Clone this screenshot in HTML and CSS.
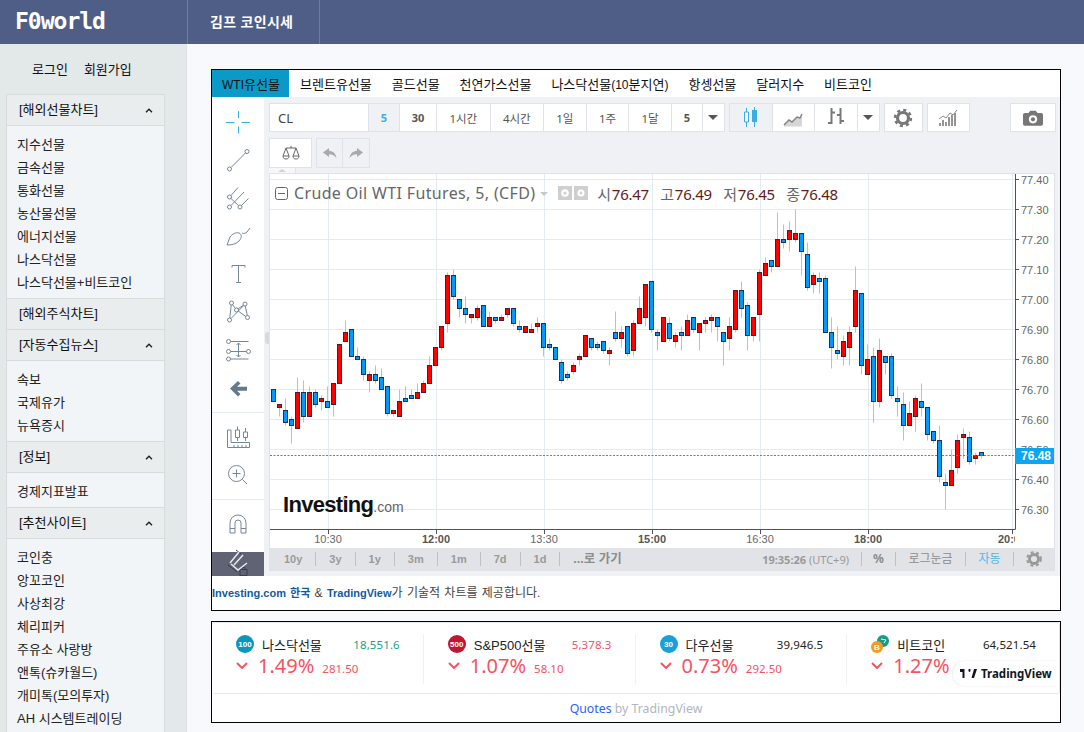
FILE: index.html
```html
<!DOCTYPE html>
<html lang="ko">
<head>
  <meta charset="UTF-8">
  <meta name="viewport" content="width=device-width, initial-scale=1.0">
  <title>F0world</title>
  <link rel="stylesheet" href="styles.css">
</head>
<body>
  <header class="topbar">
    <a class="logo">F0world</a>
    <nav class="topnav"><a>김프 코인시세</a></nav>
  </header>

  <div class="layout">
    <aside class="sidebar">
      <div class="auth"><a>로그인</a><a>회원가입</a></div>

      <div class="sideHead"><span>[해외선물차트]</span><svg class="chev" viewBox="0 0 8 5"><path d="M1 4.2 4 1.2l3 3"/></svg></div>
      <ul class="sideList">
        <li>지수선물</li><li>금속선물</li><li>통화선물</li><li>농산물선물</li><li>에너지선물</li><li>나스닥선물</li><li>나스닥선물+비트코인</li>
      </ul>

      <div class="sideHead"><span>[해외주식차트]</span></div>

      <div class="sideHead"><span>[자동수집뉴스]</span><svg class="chev" viewBox="0 0 8 5"><path d="M1 4.2 4 1.2l3 3"/></svg></div>
      <ul class="sideList">
        <li>속보</li><li>국제유가</li><li>뉴욕증시</li>
      </ul>

      <div class="sideHead"><span>[정보]</span><svg class="chev" viewBox="0 0 8 5"><path d="M1 4.2 4 1.2l3 3"/></svg></div>
      <ul class="sideList">
        <li>경제지표발표</li>
      </ul>

      <div class="sideHead"><span>[추천사이트]</span><svg class="chev" viewBox="0 0 8 5"><path d="M1 4.2 4 1.2l3 3"/></svg></div>
      <ul class="sideList">
        <li>코인충</li><li>앙꼬코인</li><li>사상최강</li><li>체리피커</li><li>주유소 사랑방</li><li>앤톡(슈카월드)</li><li>개미톡(모의투자)</li><li>AH 시스템트레이딩</li>
      </ul>
    </aside>

    <main class="content">
      <section class="chartBox">
        <div class="tabs">
          <a class="tab active"><span class="latin">WTI</span>유선물</a>
          <a class="tab">브렌트유선물</a>
          <a class="tab">골드선물</a>
          <a class="tab">천연가스선물</a>
          <a class="tab">나스닥선물<span class="latin">(10</span>분지연<span class="latin">)</span></a>
          <a class="tab">항셍선물</a>
          <a class="tab">달러지수</a>
          <a class="tab">비트코인</a>
        </div>

        <div class="widget">
          <div class="tools">
            <div class="tool"><svg class="ico" viewBox="0 0 28 28"><path class="blue" d="M2 14.5h8.5M17.500 14.500H26M14.500 3v7M14.500 18.500v7"/></svg></div>
            <div class="tool"><svg class="ico" viewBox="0 0 28 28"><circle cx="5.500" cy="23" r="2"/><circle cx="23" cy="5.500" r="2"/><path d="M7 21.500 21.500 7"/></svg></div>
            <div class="tool"><svg class="ico" viewBox="0 0 28 28"><circle cx="5.500" cy="13" r="2"/><circle cx="5.500" cy="23" r="2"/><circle cx="16" cy="23" r="2"/><path d="M7 11.500 14 3.500M7 14.500l7.500 7M7 21.500 20 8M17.500 21.500l7-7"/></svg></div>
            <div class="tool"><svg class="ico" viewBox="0 0 28 28"><path d="M3 23 6 15c2-3 6-5 9-4 3 1 3 5 0 8-3 3-7 4-12 4zM18 11c2 1 4 0 5-1M23 10l3-4"/></svg></div>
            <div class="tool"><svg class="ico" viewBox="0 0 28 28"><path d="M8 5.500h13M14.500 5.500v17M12 22.500h5M8 5.500v2M21 5.500v2"/></svg></div>
            <div class="tool"><svg class="ico" viewBox="0 0 28 28"><circle cx="7.500" cy="5" r="2"/><circle cx="21" cy="6" r="2"/><circle cx="12.500" cy="12" r="2"/><circle cx="5.500" cy="22" r="2"/><circle cx="23.500" cy="19.500" r="2"/><path d="M7.200 7 5.800 20M8.500 6.700l3 3.800M14 10.800l5.500-3.600M14.200 13l7.600 5.500M21.300 8l2 9.500M7 20.500 19.700 7.500"/></svg></div>
            <div class="tool"><svg class="ico" viewBox="0 0 28 28"><circle cx="4.500" cy="5.500" r="2"/><circle cx="4.500" cy="15.500" r="2"/><circle cx="24.500" cy="15.500" r="2"/><circle cx="4.500" cy="23" r="2"/><path d="M6.500 5.500h18M6.500 15.500h16M6.500 23h18M14.500 7v14M12.500 9l2-2 2 2M12.500 19l2 2 2-2"/></svg></div>
            <div class="tool"><svg class="ico" viewBox="0 0 28 28"><path class="solid" d="M6 14.500 14 7l2.500 2.500-3.500 3.200h10v4H13l3.500 3.300L14 22.500z"/></svg></div>
            <div class="toolLine"></div>
            <div class="tool"><svg class="ico" viewBox="0 0 28 28"><path d="M3.500 8v17.500h22v-5H7V8zM10 25v-2M14 25v-2M18 25v-2M22 25v-2M13.500 4.500V19M21.500 6v13"/><path class="fillWhite" d="M11.500 8h4v7.500h-4zM19.500 10h4v5.500h-4z"/></svg></div>
            <div class="tool"><svg class="ico" viewBox="0 0 28 28"><circle cx="12.500" cy="13.500" r="8"/><path d="M18.500 19.500l4.500 4.500M8.500 13.500h8M12.500 9.500v8"/></svg></div>
            <div class="toolLine last"></div>
            <div class="tool"><svg class="ico" viewBox="0 0 28 28"><path d="M6 23V13a8 8 0 0 1 16 0v10h-5V13a3 3 0 0 0-6 0v10zM6 18.500h5M17 18.500h5"/></svg></div>
            <div class="lockBox"><svg class="lockIco" viewBox="0 0 52 24"><path class="lockDark" d="M24-2 29 2"/><path class="lockWhite" d="M18 11 27 0M22 13 31 3"/><path class="lockDark" d="M16 13l9 7M28 17.500h7v6h-7zM30 17.500v-2h3v2"/><path class="lockWhite" d="M19 12l7 6 9-7"/></svg></div>
          </div>

          <div class="chartSide">
            <div class="handle"></div>
            <div class="bar">
              <div class="group">
                <div class="symbol">CL</div>
                <a class="btn on num">5</a><a class="btn dark num2">30</a><a class="btn hr">1시간</a><a class="btn hr">4시간</a><a class="btn">1일</a><a class="btn">1주</a><a class="btn">1달</a><a class="btn dark num">5</a>
                <a class="btn caret"><i class="tri"></i></a>
              </div>
              <div class="group">
                <a class="btn pressed"><svg class="tbIco" viewBox="0 0 20 22"><path class="candleLine" d="M5.500 1v4M5.500 15v5"/><path class="candleBody" d="M3.500 5h4v10h-4z"/><path class="candleLine" d="M13.500 0v3M13.500 15v5"/><path class="candleFill" d="M11 3h5v12h-5z"/></svg></a>
                <a class="btn"><svg class="tbIco" viewBox="0 0 20 22"><path class="areaFill" d="M1 18 6 13l3 2 5-5 3 1 2-4v12.500H1z"/><path class="areaLine" d="M1 18 6 13l3 2 5-5 3 1 2-4"/></svg></a>
                <a class="btn"><svg class="tbIco" viewBox="0 0 20 22"><path class="barLine" d="M5.500 1v16M2 16h3.500M5.500 5.500H9M14.500 1v16M11 8h3.500M14.500 14H18"/></svg></a>
                <a class="btn caret"><i class="tri"></i></a>
              </div>
              <div class="group">
                <a class="btn gear"><svg class="gearIco" viewBox="0 0 20 20"><circle class="gearRing" cx="10" cy="10" r="5.500"/><circle class="gearTeeth" cx="10" cy="10" r="8"/></svg></a>
              </div>
              <div class="group">
                <a class="btn ind"><svg class="tbIco" viewBox="0 0 20 20"><path class="miniBars" d="M2 18v-3M5 18v-6M8 18v-4M11 18V9M14 18V7M17 18V5"/><path class="miniLine" d="M1 11l4-3 3 2 4-5 3 2 4-5"/></svg></a>
              </div>
              <div class="group push">
                <a class="btn cam"><svg class="camIco" viewBox="0 0 22 17"><path d="M2 3h4l2-2.500h6L16 3h4a2 2 0 0 1 2 2v10a2 2 0 0 1-2 2H2a2 2 0 0 1-2-2V5a2 2 0 0 1 2-2z"/><circle class="camHole" cx="11" cy="10" r="4.500"/><circle cx="11" cy="10" r="2.300"/></svg></a>
              </div>
            </div>

            <div class="bar second">
              <div class="group"><a class="btn scale"><svg class="scaleIco" viewBox="0 0 18 16"><path d="M4 3h10M9 1v2M4 3 1 11M4 3l3 8M14 3l-3 8M14 3l3 8"/><path class="scaleFill" d="M1 11h6c0 2-1 3-3 3s-3-1-3-3zM11 11h6c0 2-1 3-3 3s-3-1-3-3z"/></svg></a></div>
              <div class="group off">
                <a class="btn hist"><svg class="histIco" viewBox="0 0 14 11"><path d="M6 0 0 4.500 6 9V6.300c3.500 0 5.800 1.200 7.500 4C13 5.500 10 3 6 2.700z"/></svg></a>
                <a class="btn hist"><svg class="histIco flip" viewBox="0 0 14 11"><path d="M6 0 0 4.500 6 9V6.300c3.500 0 5.800 1.200 7.500 4C13 5.500 10 3 6 2.700z"/></svg></a>
              </div>
            </div>
            <div class="foldTab"><i class="triUp"></i></div>

            <div class="pane">
              <svg id="plot" class="plot" viewBox="270 174 784 374"></svg>

              <div class="legend">
                <svg class="fold" viewBox="0 0 13 13"><rect x=".5" y=".5" width="12" height="12" rx="2"/><path d="M3 6.500h7"/></svg>
                <span class="title">Crude Oil WTI Futures, 5, (CFD)</span>
                <i class="triMini"></i>
                <span class="flag"><svg viewBox="0 0 14 14"><circle cx="7" cy="7" r="3.800"/><circle class="flagDot" cx="7" cy="7" r="1.600"/></svg></span>
                <span class="flag"><svg viewBox="0 0 14 14"><circle cx="7" cy="7" r="3.500"/><circle class="flagDot" cx="7" cy="7" r="1.400"/></svg></span>
                <span class="ohlc"><b>시</b>76.47</span>
                <span class="ohlc"><b>고</b>76.49</span>
                <span class="ohlc"><b>저</b>76.45</span>
                <span class="ohlc"><b>종</b>76.48</span>
              </div>

              <div class="brand">Investing<small>.com</small><i class="brandDot"></i></div>

              <div class="range">
                <a>10y</a><a>3y</a><a>1y</a><a>3m</a><a>1m</a><a>7d</a><a>1d</a><a class="goto">...로 가기</a>
                <span class="clock">19:35:26 <em>(UTC+9)</em></span>
                <a class="opt pc">%</a><a class="opt reg">로그눈금</a><a class="opt auto">자동</a>
                <svg class="rangeGear" viewBox="0 0 20 20"><circle class="gearRing" cx="10" cy="10" r="5"/><circle class="gearTeeth" cx="10" cy="10" r="7.500"/></svg>
              </div>
            </div>
          </div>
        </div>

        <p class="credit"><a>Investing.com 한국</a> &amp; <a>TradingView</a>가 기술적 차트를 제공합니다.</p>
      </section>

      <section class="tickerBox">
        <div class="tickerCard">
          <div class="cell">
            <div class="rowTop">
              <span class="name"><i class="badge nq">100</i>나스닥선물</span><span class="price up">18,551.6</span>
            </div>
            <div class="rowBottom">
              <svg class="down" viewBox="0 0 12 7"><path d="M1 1l5 5 5-5"/></svg><span class="pct">1.49%</span><span class="diff">281.50</span>
            </div>
          </div>
          <div class="cell">
            <div class="rowTop">
              <span class="name"><i class="badge sp">500</i>S&amp;P500선물</span><span class="price dn">5,378.3</span>
            </div>
            <div class="rowBottom">
              <svg class="down" viewBox="0 0 12 7"><path d="M1 1l5 5 5-5"/></svg><span class="pct">1.07%</span><span class="diff">58.10</span>
            </div>
          </div>
          <div class="cell">
            <div class="rowTop">
              <span class="name"><i class="badge dj">30</i>다우선물</span><span class="price">39,946.5</span>
            </div>
            <div class="rowBottom">
              <svg class="down" viewBox="0 0 12 7"><path d="M1 1l5 5 5-5"/></svg><span class="pct">0.73%</span><span class="diff">292.50</span>
            </div>
          </div>
          <div class="cell">
            <div class="rowTop">
              <span class="name"><svg class="coin" viewBox="0 0 18 18"><circle class="coinBack" cx="12" cy="6" r="6"/><path class="coinMark" d="M10 4l5 1-2 3"/><circle class="coinFront" cx="6" cy="12" r="6"/><text class="coinSign" x="6" y="15">B</text></svg>비트코인</span><span class="price">64,521.54</span>
            </div>
            <div class="rowBottom">
              <svg class="down" viewBox="0 0 12 7"><path d="M1 1l5 5 5-5"/></svg><span class="pct">1.27%</span>
            </div>
          </div>
          <div class="tvBadge">
            <svg class="tvLogo" viewBox="0 6 34 12" preserveAspectRatio="none"><path d="M14 6H0v4h5v8h4V6zM28 18h-5l5-12h6zM19 10a2.200 2.200 0 1 0 0-4.400 2.200 2.200 0 0 0 0 4.400z"/></svg>
            TradingView
          </div>
        </div>
        <div class="quotes"><a>Quotes</a> by TradingView</div>
      </section>
    </main>
  </div>

  <script src="chart.js"></script>
</body>
</html>
```

FILE: styles.css
```css
*{
  box-sizing: border-box;
}
html, body{
  margin: 0;
  height: 100%;
  overflow: hidden;
}
body{
  font-family: "Liberation Sans", "Noto Sans CJK KR", sans-serif;
  font-size: 13px;
  color: #111;
  background: #f8f9fc;
}
ul{
  list-style: none;
  margin: 0;
  padding: 0;
}
i, em{
  font-style: normal;
}
.latin{
  font-size: 12px;
}

/* top */
.topbar{
  display: flex;
  height: 44px;
  background: #4f5e86;
  color: #fff;
}
.logo{
  width: 188px;
  padding-left: 15px;
  border-right: 1px solid #6f7c9d;
  font: bold 23px/43px "DejaVu Sans Mono", monospace;
  letter-spacing: -1px;
}
.topnav{
  display: flex;
  align-items: center;
  width: 132px;
  padding: 0 0 2px 22px;
  border-right: 1px solid #6f7c9d;
  font-size: 14px;
  font-weight: bold;
  letter-spacing: .3px;
}

.layout{
  display: flex;
  height: 688px;
}

/* sidebar */
.sidebar{
  width: 187px;
  flex: none;
  padding-left: 6px;
  padding-right: 21px;
  background: #e3e8e8;
  border-right: 1px solid #dde2e2;
  overflow: hidden;
}
.auth{
  display: flex;
  align-items: center;
  gap: 16px;
  height: 50px;
  padding: 0 0 2px 26px;
}
.sideHead{
  display: flex;
  align-items: center;
  justify-content: space-between;
  height: 31px;
  padding: 0 11px 3px 12px;
  background: #e9eded;
  border: 1px solid #d6dbdb;
  border-bottom: 0;
}
.chev{
  width: 8px;
  height: 5px;
  margin-top: 3px;
  fill: none;
  stroke: #1b1b1b;
  stroke-width: 1.3;
}
.sideList{
  padding: 7px 0 4px 10px;
  background: #f1f5f7;
  border: 1px solid #d6dbdb;
  border-bottom: 0;
}
.sideList li{
  height: 23px;
  line-height: 23px;
  color: #222;
}

/* content */
.content{
  flex: 1;
  padding: 25px 23px 0 24px;
}
.chartBox{
  height: 542px;
  background: #fff;
  border: 1px solid #000;
}
.tabs{
  display: flex;
  height: 27px;
  background: #fff;
}
.tab{
  padding: 0 10px;
  line-height: 29px;
}
.tab.active{
  width: 77px;
  margin-right: 1px;
  background: #0b99c7;
  white-space: nowrap;
}
.widget{
  display: flex;
  height: 479px;
  background: #f0f1f5;
}

/* left tools */
.tools{
  display: flex;
  flex-direction: column;
  width: 52px;
  padding-top: 6px;
  background: #fff;
}
.tool{
  display: flex;
  align-items: center;
  justify-content: center;
  flex: none;
  height: 38px;
}
.ico{
  width: 28px;
  height: 28px;
  fill: none;
  stroke: #758696;
  stroke-width: 1;
}
.ico .blue{
  stroke: #34b6e9;
}
.ico .solid{
  fill: #64798c;
  stroke: none;
}
.ico .fillWhite{
  fill: #fff;
}
.toolLine{
  flex: none;
  height: 1px;
  margin: 5px 0 4px;
  background: #e3ebf0;
}
.toolLine.last{
  margin: 6px 0 5px;
}
.lockBox{
  margin-top: auto;
  height: 24px;
  background: #5f6374;
}
.lockIco{
  display: block;
  width: 52px;
  height: 24px;
  fill: none;
  overflow: visible;
}
.lockWhite{
  stroke: #e8eaee;
  stroke-width: 1.5;
}
.lockDark{
  stroke: #3b3f4d;
}

/* chart column */
.chartSide{
  position: relative;
  flex: 1;
  padding: 6px 5px 5px;
}
.handle{
  position: absolute;
  left: 1px;
  top: 235px;
  width: 4px;
  height: 12px;
  border-radius: 3px 0 0 3px;
  background: #d7d9de;
}
.bar{
  display: flex;
  gap: 4px;
  height: 29px;
}
.bar.second{
  height: 30px;
  margin-top: 6px;
}
.group{
  display: flex;
  background: #fff;
  border: 1px solid #dfe2e8;
}
.group.push{
  margin-left: auto;
  margin-right: -1px;
}
.group.off{
  background: #f0f1f5;
}
.symbol{
  width: 99px;
  padding-left: 8px;
  border-right: 1px solid #dfe2e8;
  font: 13px/28px "Noto Sans", sans-serif;
  color: #444;
}
.btn{
  display: flex;
  align-items: center;
  justify-content: center;
  width: 42.67px;
  border-right: 1px solid #dfe2e8;
  font: 11.5px "Noto Sans", "Noto Sans CJK KR", sans-serif;
  color: #555;
}
.btn:last-child{
  border-right: 0;
}
.btn.num{
  width: 31px;
}
.btn.num2{
  width: 37px;
}
.btn.hr{
  width: 53.5px;
}
.btn.dark{
  font-size: 11px;
  font-weight: bold;
}
.btn.on{
  background: #f0f1f5;
  color: #39ade6;
  font-size: 11px;
  font-weight: bold;
}
.btn.caret{
  width: 21px;
}
.tri{
  width: 0;
  height: 0;
  border-left: 5px solid transparent;
  border-right: 5px solid transparent;
  border-top: 5px solid #555;
}
.btn.pressed{
  background: #f0f1f5;
}
.btn.gear{
  width: 37px;
}
.btn.ind{
  width: 41px;
}
.btn.cam{
  width: 44px;
}
.btn.scale{
  width: 41px;
}
.btn.hist{
  width: 26px;
}
.tbIco{
  width: 20px;
  height: 22px;
  fill: none;
}
.candleLine{
  stroke: #39ade6;
}
.candleBody{
  stroke: #39ade6;
  fill: #fff;
}
.candleFill{
  fill: #39ade6;
}
.areaFill{
  fill: #d6d6d6;
}
.areaLine{
  stroke: #808080;
  stroke-width: 1.4;
}
.barLine{
  stroke: #787878;
  stroke-width: 2;
}
.miniBars{
  stroke: #8a8a8a;
  stroke-width: 1.8;
}
.miniLine{
  stroke: #8a8a8a;
}
.gearIco{
  width: 20px;
  height: 20px;
  fill: none;
}
.gearRing{
  stroke: #777;
  stroke-width: 3.200;
  fill: none;
}
.gearTeeth{
  stroke: #777;
  stroke-width: 2.400;
  stroke-dasharray: 3.100 3.180;
  fill: none;
}
.camIco{
  width: 20px;
  height: 16px;
  fill: #777;
}
.camHole{
  fill: #fff;
}
.scaleIco{
  width: 18px;
  height: 16px;
  fill: none;
  stroke: #666;
}
.scaleFill{
  fill: #fff;
}
.histIco{
  width: 14px;
  height: 11px;
  fill: #a9a9a9;
}
.histIco.flip{
  transform: scaleX(-1);
}
.foldTab{
  display: flex;
  align-items: center;
  justify-content: center;
  width: 27px;
  height: 5px;
  background: #f7f7f9;
  border-right: 1px solid #dfe2e8;
}
.triUp{
  width: 0;
  height: 0;
  border-left: 4px solid transparent;
  border-right: 4px solid transparent;
  border-bottom: 3px solid #d0d2d8;
}

/* chart */
.pane{
  position: relative;
  width: 786px;
  height: 398px;
  background: #fff;
  border: 1px solid #dfe2e8;
}
.plot{
  display: block;
  width: 784px;
  height: 374px;
}
.gridLine{
  stroke: #e3ebf0;
}
.axisLine{
  stroke: #50535e;
}
.priceText{
  font: 11px "Liberation Sans", sans-serif;
  fill: #666;
}
.timeText{
  font: 11px "Liberation Sans", sans-serif;
  fill: #666;
  text-anchor: middle;
}
.timeText.major{
  font-weight: bold;
  fill: #555;
}
.lastLine{
  stroke: #0c9be8;
  stroke-dasharray: 2 1.500;
}
.lastBox{
  fill: #0ca5f4;
}
.lastText{
  font: bold 12px "Liberation Sans", sans-serif;
  fill: #fff;
}
.maskWhite{
  fill: #fff;
}
.wick.r{
  stroke: #a9c9cd;
}
.wick.b{
  stroke: #eaa9b6;
}
.body.r{
  fill: #ff0000;
  stroke: #4f1a2a;
}
.body.b{
  fill: #0099ff;
  stroke: #1c2f5a;
}

.legend{
  position: absolute;
  left: 5px;
  top: 10px;
  display: flex;
  align-items: center;
  height: 18px;
  font: 15px "Noto Sans", "Noto Sans CJK KR", sans-serif;
  white-space: nowrap;
}
.fold{
  width: 13px;
  height: 13px;
  margin-right: 6px;
  flex: none;
  fill: none;
  stroke: #666;
}
.title{
  font-size: 16px;
  letter-spacing: .35px;
  color: #666;
}
.triMini{
  width: 0;
  height: 0;
  margin: 1px 10px 0 5px;
  border-left: 4px solid transparent;
  border-right: 4px solid transparent;
  border-top: 4px solid #c8c8c8;
}
.flag{
  width: 14px;
  height: 14px;
  margin-right: 2px;
  background: #cfcfcf;
}
.flag svg{
  display: block;
  fill: #fff;
}
.flagDot{
  fill: #cfcfcf;
}
.ohlc{
  width: 63px;
  letter-spacing: -.3px;
  color: #5f2020;
}
.flag + .ohlc{
  margin-left: 7px;
}
.ohlc b{
  margin-right: 1px;
  font-weight: normal;
  color: #666;
}
.brand{
  position: absolute;
  left: 13px;
  top: 318px;
  font: bold 22px/26px "Liberation Sans", sans-serif;
  letter-spacing: -.7px;
  color: #111;
}
.brand small{
  font-size: 14px;
  font-weight: normal;
  letter-spacing: 0;
  color: #666;
}
.brandDot{
  position: absolute;
  left: 60px;
  top: 5px;
  width: 3px;
  height: 3px;
  border-radius: 50%;
  background: #f5a623;
}
.range{
  display: flex;
  align-items: center;
  height: 22px;
  background: #e2e3e6;
  font: bold 11px "Liberation Sans", "Noto Sans CJK KR", sans-serif;
  color: #9a9a9a;
}
.range a{
  height: 14px;
  line-height: 14px;
  padding: 0 13px;
  border-right: 1px solid #bfc0c4;
}
.range a:first-child{
  padding: 0 13px 0 14px;
}
.range .goto{
  border-right: 0;
  font-size: 12.500px;
  color: #8c8c8c;
}
.clock{
  margin-left: auto;
  padding-right: 12px;
  font: bold 11px "Noto Sans", sans-serif;
  color: #999;
}
.clock em{
  font-weight: normal;
}
.range .opt{
  padding: 0;
  text-align: center;
  font: 12px/14px "Noto Sans", "Noto Sans CJK KR", sans-serif;
  color: #8c8c8c;
  border-left: 1px solid #bfc0c4;
  border-right: 0;
}
.range .pc{
  width: 34px;
  font-weight: bold;
}
.range .reg{
  width: 70px;
}
.range .auto{
  width: 49px;
  color: #4db8e8;
  border-right: 1px solid #bfc0c4;
}
.rangeGear{
  width: 18px;
  height: 18px;
  margin: 0 11px;
  flex: none;
}
.rangeGear .gearRing,
.rangeGear .gearTeeth{
  stroke: #999;
}

.credit{
  height: 21px;
  margin: 9px 0 0;
  overflow: hidden;
  font-size: 12px;
  line-height: 16px;
  word-spacing: 1px;
  color: #444;
}
.credit a{
  font-size: 11px;
  font-weight: bold;
  color: #135a9c;
}

/* ticker */
.tickerBox{
  height: 102px;
  margin-top: 10px;
  background: #fff;
  border: 1px solid #000;
}
.tickerCard{
  position: relative;
  display: grid;
  grid-template-columns: repeat(4, 1fr);
  align-items: start;
  height: 72px;
  padding-top: 11px;
  border: 1px solid #e6e8ef;
  border-radius: 3px;
  border-left: 0;
}
.cell{
  height: 50px;
  padding: 0 23px 0 24px;
  border-right: 1px solid #eff0f4;
}
.cell:nth-child(4){
  border-right: 0;
}
.rowTop{
  display: flex;
  align-items: center;
  justify-content: space-between;
  height: 20px;
}
.name{
  display: flex;
  align-items: center;
  gap: 8px;
  color: #222;
}
.badge{
  display: flex;
  align-items: center;
  justify-content: center;
  width: 18px;
  height: 18px;
  border-radius: 50%;
  font: bold 8px "Liberation Sans", sans-serif;
  color: #fff;
}
.nq{
  background: #0c95bd;
}
.sp{
  background: #c2152f;
}
.dj{
  background: #1aa0d8;
}
.coin{
  width: 18px;
  height: 18px;
}
.coinBack{
  fill: #1a9a88;
}
.coinMark{
  fill: none;
  stroke: #fff;
}
.coinFront{
  fill: #f79a1f;
}
.coinSign{
  font: bold 8px "Liberation Sans", sans-serif;
  fill: #fff;
  text-anchor: middle;
}
.price{
  font: 11.500px "Noto Sans", sans-serif;
  letter-spacing: .1px;
  color: #222;
}
.price.up{
  color: #1a9f85;
}
.price.dn{
  color: #f7525f;
}
.rowBottom{
  display: flex;
  align-items: baseline;
  margin-top: -2px;
  color: #f7525f;
}
.down{
  align-self: center;
  width: 12px;
  height: 7px;
  margin-right: 10px;
  fill: none;
  stroke: #f7525f;
  stroke-width: 2;
}
.pct{
  margin-right: 8px;
  font: 20px "Noto Sans", sans-serif;
}
.diff{
  font: 11.500px "Noto Sans", sans-serif;
}
.tvBadge{
  position: absolute;
  right: 0;
  top: 38px;
  display: flex;
  align-items: center;
  gap: 4px;
  width: 106px;
  height: 25px;
  padding-left: 7px;
  border-radius: 12px 0 0 12px;
  background: #fff;
  box-shadow: -1px 0 2px rgba(0,0,0,.08);
  font: bold 11.500px "Noto Sans", sans-serif;
  color: #131722;
}
.tvLogo{
  width: 17px;
  height: 9px;
  fill: #131722;
}
.quotes{
  height: 28px;
  text-align: center;
  font: 12.300px/30px "Noto Sans", sans-serif;
  color: #b2b5be;
}
.quotes a{
  color: #2962ff;
}
```

FILE: chart.js
```js
// top, bottom, high, low in hundredths above 76.00, then 1 = red / 0 = blue
let candles = [
  [70,66,70,66,0],[65,64,65,61,1],[63,59,67,58,0],[60,58,61,52,0],[69,57,74,57,1],[69,61,73,59,0],[69,61,71,61,1],[69,65,70,64,0],
  [67,66,68,63,1],[66,64,71,64,0],[72,65,72,61,1],[85,72,85,72,1],[89,86,93,86,1],[90,81,90,81,0],[81,80,84,80,0],[80,75,81,73,0],
  [75,73,76,69,1],[75,73,78,72,0],[74,70,77,70,0],[71,62,71,61,0],[63,62,63,61,1],[66,61,70,61,1],[67,66,71,66,0],[68,67,70,67,0],
  [69,67,72,67,1],[72,69,73,69,1],[78,72,81,72,1],[84,78,84,78,1],[91,84,91,83,1],[108,92,109,89,1],[108,101,110,100,0],[100,97,100,94,0],
  [97,95,101,92,0],[95,94,95,92,1],[97,94,98,93,1],[98,91,98,91,0],[94,91,96,91,1],[94,93,94,92,0],[94,93,95,93,1],[97,95,97,94,1],
  [97,92,97,91,0],[91,90,93,89,0],[91,89,91,89,1],[90,89,92,89,1],[92,91,94,89,1],[92,84,92,81,0],[85,84,87,83,0],[84,80,84,80,0],
  [79,73,80,72,0],[75,74,76,73,0],[78,76,79,75,1],[81,80,82,78,1],[88,81,88,81,1],[87,84,87,83,0],[85,84,86,83,0],[86,83,86,82,0],
  [83,82,84,78,1],[89,87,96,86,0],[89,87,91,84,1],[91,82,91,81,0],[92,83,93,81,1],[97,92,101,92,1],[105,94,105,91,1],[106,90,106,89,0],
  [89,88,90,83,0],[94,86,94,86,1],[92,87,94,86,0],[88,86,89,84,1],[89,88,91,83,0],[93,88,95,88,1],[94,90,94,89,0],[92,89,92,83,1],
  [93,92,94,89,1],[94,93,95,89,1],[94,91,94,86,0],[89,86,89,78,0],[91,87,94,83,1],[103,90,103,89,1],[103,97,106,94,0],[98,88,99,83,0],
  [94,88,94,86,1],[109,95,110,86,1],[112,108,114,108,1],[113,111,113,109,0],[120,111,129,111,1],[120,119,125,117,0],[123,120,126,116,1],[122,120,130,119,1],
  [122,116,122,108,0],[115,104,119,103,0],[108,105,109,102,1],[107,106,109,102,0],[107,89,108,89,0],[89,84,94,77,0],[83,82,91,80,0],[86,81,88,78,1],
  [89,84,91,78,1],[103,91,111,89,1],[102,78,102,75,0],[80,75,85,75,1],[81,66,84,59,0],[83,66,87,64,1],[81,79,81,75,0],[81,68,82,67,0],
  [67,66,71,61,0],[65,58,69,53,0],[62,58,66,58,1],[67,61,68,56,1],[66,64,72,61,0],[64,55,64,53,0],[56,53,56,52,0],[53,41,58,39,0],
  [39,38,42,30,0],[43,38,50,38,1],[53,44,55,42,1],[55,54,57,47,1],[54,46,56,45,0],[48,47,49,45,1],[49,48,49,47,0]
]
let times = [[328,'10:30'],[436,'12:00',1],[544,'13:30'],[652,'15:00',1],[760,'16:30'],[868,'18:00',1],[1012,'20:00',1]]

function yOf(n){
  return 179.5 + (140 - n) * 3
}

let html = ''

// grid
for(let n = 140; n >= 30; n -= 10){
  html += `<path class="gridLine" d="M270 ${yOf(n)}H1015"/>`
}
times.forEach(t => {
  html += `<path class="gridLine" d="M${t[0] + .5} 174V529"/>`
})

// candles
candles.forEach((c, i) => {
  let x = 273.5 + i * 6, cls = c[4] ? 'r' : 'b'
  html += `<path class="wick ${cls}" d="M${x} ${yOf(c[2])}V${yOf(c[3])}"/>`
  html += `<rect class="body ${cls}" x="${x - 2}" y="${yOf(c[0])}" width="4" height="${(c[0] - c[1]) * 3}"/>`
})

// time axis
times.forEach(t => {
  html += `<path class="axisLine" d="M${t[0] + .5} 529V534"/>`
  html += `<text class="timeText${t[2] ? ' major' : ''}" x="${t[0]}" y="543">${t[1]}</text>`
})
html += '<rect class="maskWhite" x="1015" y="530" width="39" height="18"/>'

// price axis
for(let n = 140; n >= 30; n -= 10){
  html += `<path class="axisLine" d="M1015 ${yOf(n)}H1019"/>`
  html += `<text class="priceText" x="1021" y="${yOf(n) + 4}">${(76 + n / 100).toFixed(2)}</text>`
}
html += '<path class="axisLine" d="M270 529.5H1015.5M1015.5 174V529.5"/>'

// last price
html += `<path class="lastLine" d="M270 ${yOf(48)}H1015"/>`
html += '<rect class="lastBox" x="1015" y="448" width="39" height="16"/>'
html += `<text class="lastText" x="1021" y="460">76.48</text>`

document.getElementById('plot').innerHTML = html
```
